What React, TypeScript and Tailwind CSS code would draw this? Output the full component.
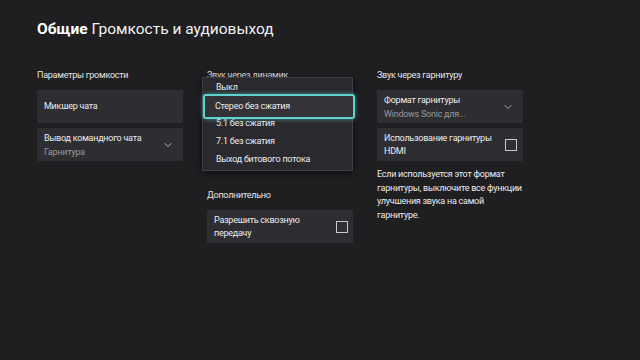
import { ChevronDown } from "lucide-react";

const font = { fontFamily: 'Roboto, "Noto Sans", sans-serif' };

function Checkbox() {
  return <div className="w-[12px] h-[12px] border-[1.5px] border-[#c9c8cb] shrink-0" />;
}

function Label({ children }: { children: React.ReactNode }) {
  return <div className="h-[28px] flex items-center text-[9px] tracking-[-0.25px] text-[#e6e5e8]">{children}</div>;
}

export default function App() {
  return (
    <div className="w-[640px] h-[360px] bg-[#1f1e21] text-white overflow-hidden" style={font}>
      <div className="pl-[37px] pt-[18px] h-[62px] text-[15.5px]">
        <span className="font-bold">Общие</span> <span className="text-[#f2f2f3]">Громкость и аудиовыход</span>
      </div>

      <div className="flex gap-[24px] pl-[37px] text-[9px] tracking-[-0.25px]">
        {/* column 1 */}
        <div className="w-[146px] flex flex-col">
          <Label>Параметры громкости</Label>
          <div className="h-[33px] bg-[#2e2d31] flex items-center px-[7px] text-[#ececee]">Микшер чата</div>
          <div className="mt-[5px] h-[33px] bg-[#2e2d31] flex items-center justify-between pl-[7px] pr-[9px]">
            <div className="flex flex-col leading-[14px]">
              <span className="text-[#ececee]">Вывод командного чата</span>
              <span className="text-[#99989c]">Гарнитура</span>
            </div>
            <ChevronDown size={12} strokeWidth={1.5} className="text-[#d6d5d8]" />
          </div>
        </div>

        {/* column 2 */}
        <div className="w-[146px] flex flex-col relative">
          <Label>Звук через динамик</Label>
          <div className="h-[33px] bg-[#2e2d31]" />
          <div className="h-[59px]" />
          <Label>Дополнительно</Label>
          <div className="h-[33px] bg-[#2e2d31] flex items-center justify-between pl-[7px] pr-[5px]">
            <div className="leading-[13px] text-[#ececee]">Разрешить сквозную<br />передачу</div>
            <Checkbox />
          </div>

          {/* open dropdown */}
          <div className="absolute left-[-5px] top-[15px] w-[151px] h-[94px] bg-[#2a292d] border border-[#3e3d41] shadow-[0_2px_8px_rgba(0,0,0,0.6)] pt-[1px] flex flex-col text-[#ececee]">
            <div className="h-[18px] flex items-center pl-[13px]">Выкл</div>
            <div className="relative h-[18px]">
              <div className="absolute left-[0px] right-[-3px] top-[-3px] bottom-[-4px] bg-[#333236] border-2 border-[#5fd3cb] rounded-[3px] shadow-[0_0_5px_rgba(80,210,200,0.6)] flex items-center pl-[10px]">
                Стерео без сжатия
              </div>
            </div>
            <div className="h-[18px] flex items-center pl-[13px]">5.1 без сжатия</div>
            <div className="h-[18px] flex items-center pl-[13px]">7.1 без сжатия</div>
            <div className="h-[18px] flex items-center pl-[13px]">Выход битового потока</div>
          </div>
        </div>

        {/* column 3 */}
        <div className="w-[146px] flex flex-col">
          <Label>Звук через гарнитуру</Label>
          <div className="h-[33px] bg-[#2e2d31] flex items-center justify-between pl-[7px] pr-[9px]">
            <div className="flex flex-col leading-[14px]">
              <span className="text-[#ececee]">Формат гарнитуры</span>
              <span className="text-[#99989c]">Windows Sonic для...</span>
            </div>
            <ChevronDown size={12} strokeWidth={1.5} className="text-[#d6d5d8]" />
          </div>
          <div className="mt-[5px] h-[33px] bg-[#2e2d31] flex items-center justify-between pl-[7px] pr-[6px]">
            <div className="leading-[13px] text-[#ececee] whitespace-nowrap">Использование гарнитуры<br />HDMI</div>
            <Checkbox />
          </div>
          <div className="mt-[7px] leading-[13.5px] text-[#ececee] whitespace-nowrap">
            Если используется этот формат<br />
            гарнитуры, выключите все функции<br />
            улучшения звука на самой<br />
            гарнитуре.
          </div>
        </div>
      </div>
    </div>
  );
}
